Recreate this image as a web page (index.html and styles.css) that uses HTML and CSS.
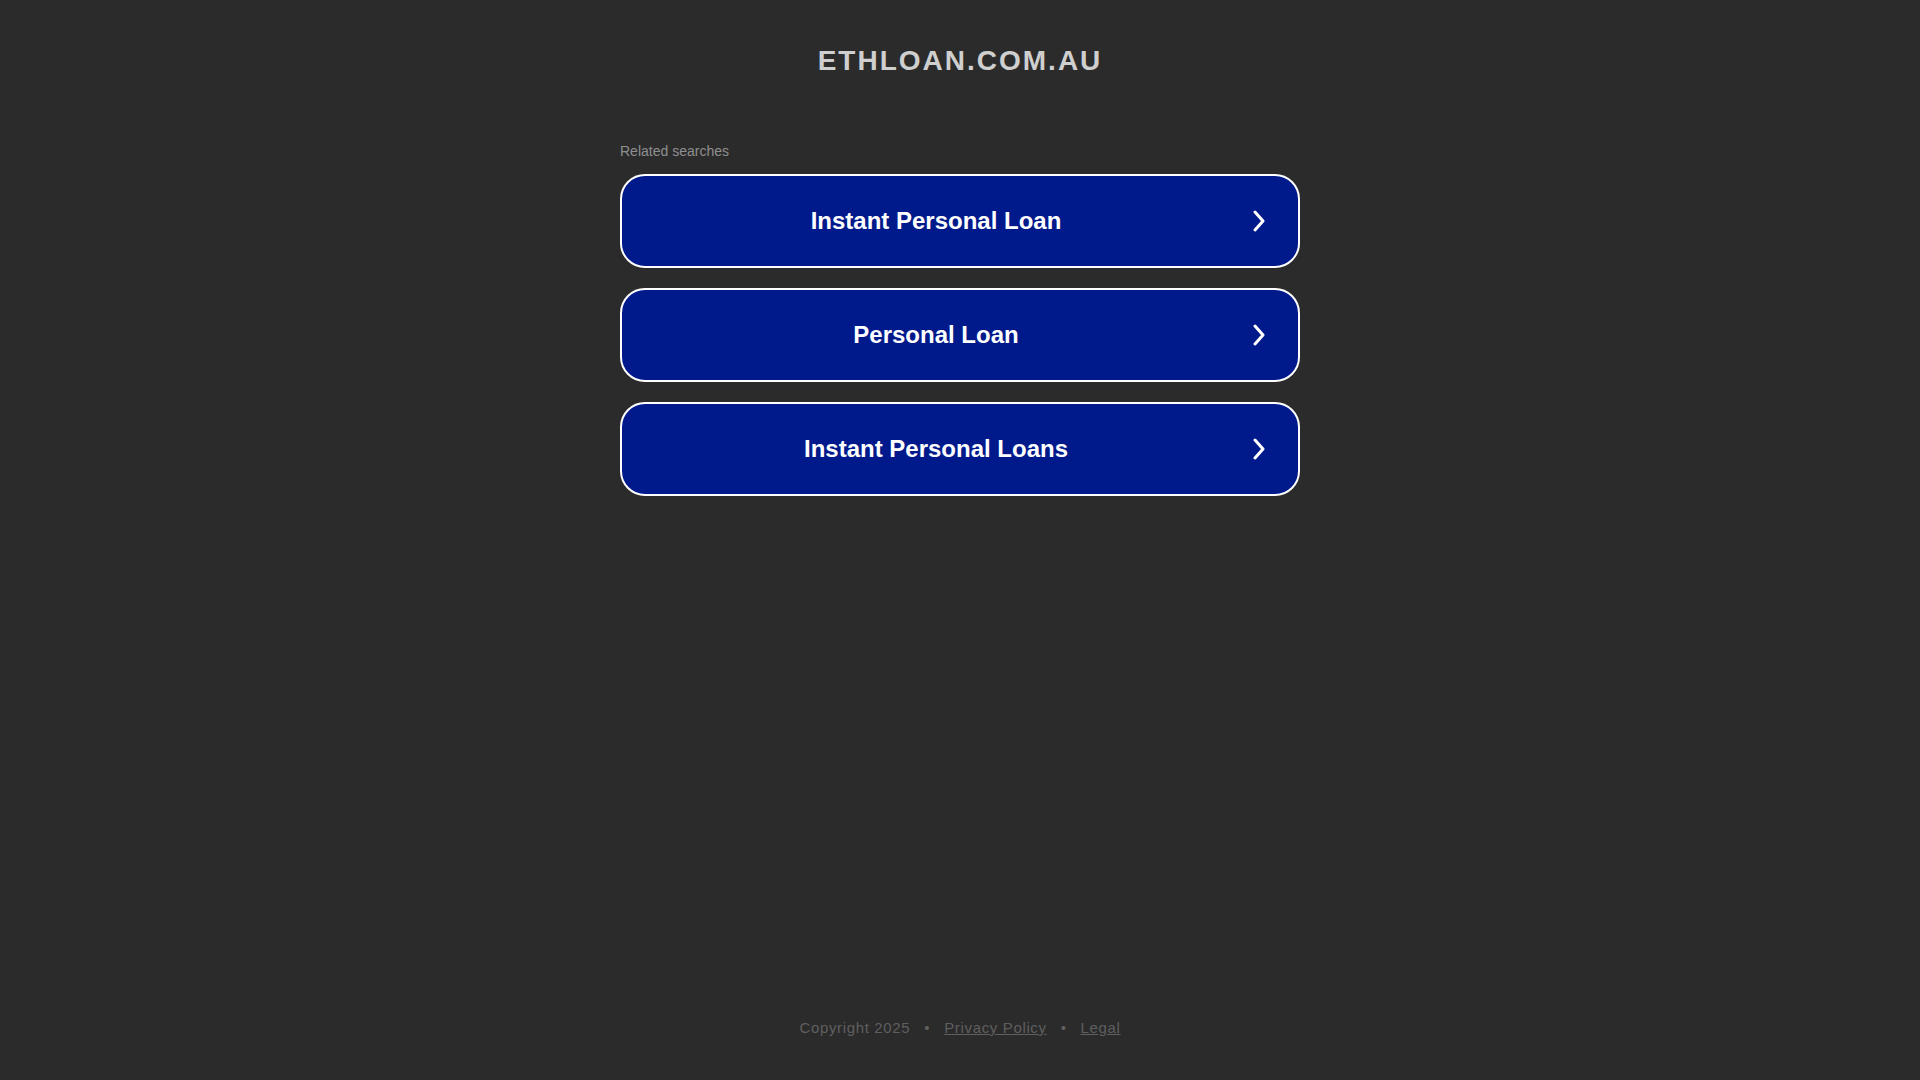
FILE: index.html
```html
<!DOCTYPE html>
<html lang="en">
<head>
<meta charset="utf-8">
<title>ethloan.com.au</title>
<link rel="stylesheet" href="styles.css">
</head>
<body>
<div class="page">
  <header class="header">
    <h1 class="domain">ETHLOAN.COM.AU</h1>
  </header>
  <main class="content">
    <p class="related">Related searches</p>
    <ul class="links">
      <li><a class="link" href="#"><span class="link-text">Instant Personal Loan</span><svg class="chev" viewBox="0 0 12 22" width="12" height="22"><path d="M2 2 L10 11 L2 20" fill="none" stroke="#fff" stroke-width="3" stroke-linecap="round" stroke-linejoin="round"/></svg></a></li>
      <li><a class="link" href="#"><span class="link-text">Personal Loan</span><svg class="chev" viewBox="0 0 12 22" width="12" height="22"><path d="M2 2 L10 11 L2 20" fill="none" stroke="#fff" stroke-width="3" stroke-linecap="round" stroke-linejoin="round"/></svg></a></li>
      <li><a class="link" href="#"><span class="link-text">Instant Personal Loans</span><svg class="chev" viewBox="0 0 12 22" width="12" height="22"><path d="M2 2 L10 11 L2 20" fill="none" stroke="#fff" stroke-width="3" stroke-linecap="round" stroke-linejoin="round"/></svg></a></li>
    </ul>
  </main>
  <footer class="footer">
    <span>Copyright 2025</span>
    <span class="dot">•</span>
    <a href="#">Privacy Policy</a>
    <span class="dot">•</span>
    <a href="#">Legal</a>
  </footer>
</div>
</body>
</html>
```
FILE: styles.css
```css
html, body {
  margin: 0;
  padding: 0;
  background: #2b2b2b;
  font-family: "Liberation Sans", Arial, sans-serif;
}
.page {
  min-height: 100vh;
  display: flex;
  flex-direction: column;
  align-items: center;
}
.header {
  padding-top: 44px;
}
.domain {
  margin: 0;
  font-size: 28px;
  line-height: 34px;
  font-weight: bold;
  letter-spacing: 2px;
  color: #cfcfcf;
  text-align: center;
}
.content {
  width: 680px;
  margin-top: 65px;
}
.related {
  margin: 0 0 15px 0;
  font-size: 14px;
  line-height: 16px;
  color: #8f8f8f;
}
.links {
  list-style: none;
  margin: 0;
  padding: 0;
  display: flex;
  flex-direction: column;
  gap: 20px;
}
.link {
  box-sizing: border-box;
  height: 94px;
  display: flex;
  align-items: center;
  padding: 0 33px 0 25px;
  background: #011a8b;
  border: 2px solid #ffffff;
  border-radius: 25px;
  text-decoration: none;
}
.link-text {
  flex: 1;
  text-align: center;
  font-size: 24px;
  font-weight: bold;
  color: #ffffff;
  margin-right: 28px;
}
.chev {
  display: block;
}
.footer {
  margin-top: auto;
  padding-bottom: 43px;
  display: flex;
  align-items: center;
  font-size: 15px;
  line-height: 18px;
  letter-spacing: 0.65px;
  color: #5f5f5f;
}
.footer a {
  color: #5f5f5f;
}
.dot {
  margin: 0 14px;
}
```
